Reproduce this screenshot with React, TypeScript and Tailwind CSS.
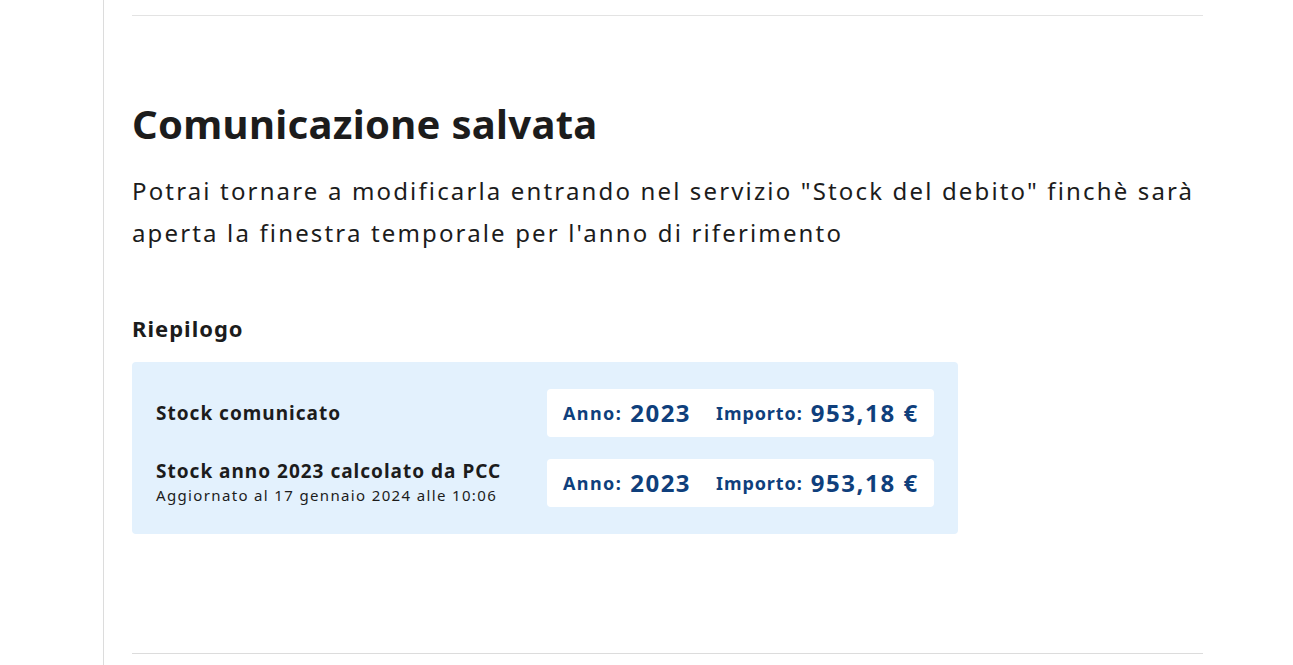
import React from "react";

type Row = { label: string; note?: string; anno: string; importo: string };

const rows: Row[] = [
  { label: "Stock comunicato", anno: "2023", importo: "953,18 €" },
  {
    label: "Stock anno 2023 calcolato da PCC",
    note: "Aggiornato al 17 gennaio 2024 alle 10:06",
    anno: "2023",
    importo: "953,18 €",
  },
];

const font = { fontFamily: "'Noto Sans', Lato, sans-serif" };

const App: React.FC = () => {
  return (
    <div className="flex min-h-[665px] bg-white text-[#1c1c1c]" style={font}>
      {/* sidebar edge */}
      <div className="w-[104px] shrink-0 border-r border-[#dcdcdc]" />

      <div className="w-[1071px] ml-[28px] flex flex-col">
        <div className="h-[16px] border-b border-[#e3e3e3]" />

        <div className="pt-[82px] pb-[119px]">
          <h1 className="text-[40px] leading-[52px] font-bold tracking-[0.3px]">Comunicazione salvata</h1>
          <p className="mt-[20px] text-[24px] leading-[42px] tracking-[2.15px]">
            Potrai tornare a modificarla entrando nel servizio "Stock del debito" finchè sarà aperta la finestra
            temporale per l'anno di riferimento
          </p>

          <h2 className="mt-[59px] text-[22px] leading-[30px] font-bold tracking-[1px]">Riepilogo</h2>

          <div className="mt-[19px] w-[826px] rounded bg-[#e3f1fd] px-[24px] pt-[27px] pb-[27px] flex flex-col gap-[22px]">
            {rows.map((r) => (
              <div key={r.label} className="flex items-center">
                <div className="w-[391px]">
                  <p className="text-[19px] leading-[24px] font-bold tracking-[1px]">{r.label}</p>
                  {r.note && <p className="text-[15px] leading-[24px] tracking-[1.35px]">{r.note}</p>}
                </div>
                <div className="w-[387px] h-[48px] rounded bg-white flex items-center pl-[16px] text-[#0f3f7c] font-bold">
                  <span className="text-[18px] tracking-[1.4px]">Anno:</span>
                  <span className="ml-[8px] text-[24px] tracking-[1.5px]">{r.anno}</span>
                  <span className="ml-[25px] text-[18px] tracking-[0.9px]">Importo:</span>
                  <span className="ml-[8px] text-[24px] tracking-[1.6px]">{r.importo}</span>
                </div>
              </div>
            ))}
          </div>
        </div>

        <div className="border-b border-[#dcdcdc]" />
      </div>
    </div>
  );
};

export default App;
